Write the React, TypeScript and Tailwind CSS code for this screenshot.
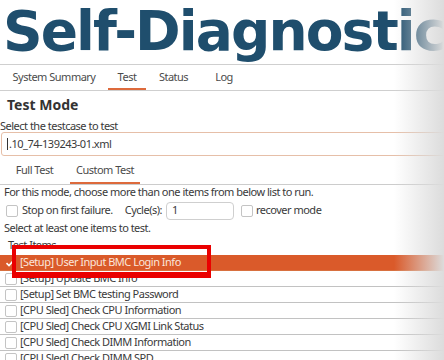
import React from "react";

const rows = [
  "[Setup] Update BMC Info",
  "[Setup] Set BMC testing Password",
  "[CPU Sled] Check CPU Information",
  "[CPU Sled] Check CPU XGMI Link Status",
  "[CPU Sled] Check DIMM Information",
  "[CPU Sled] Check DIMM SPD",
];

function Box() {
  return <span className="block w-[12px] h-[12px] rounded-[2px] border border-[#c4c4c4] bg-white shrink-0" />;
}

export default function App() {
  return (
    <div
      className="relative w-[444px] h-[360px] overflow-hidden bg-white text-[#3a3a3a] text-[11px] tracking-[-0.5px]"
      style={{ fontFamily: '"Noto Sans", "DejaVu Sans", sans-serif' }}
    >
      {/* Title */}
      <div className="h-[64px] pt-[4px] pl-[3px]">
        <div
          className="text-[55px] leading-[55px] font-bold text-[#1f4e6d] tracking-[-1.9px] whitespace-nowrap"
          style={{ fontFamily: '"DejaVu Sans", sans-serif' }}
        >
          Self-Diagnostic
        </div>
      </div>

      {/* Main tabs */}
      <div className="h-[27px] border-y border-[#cfcfcf] flex pl-[4px] gap-[4px] text-[#4b4b4b]">
        <div className="w-[100px] flex items-center justify-center">System Summary</div>
        <div className="w-[38px] flex items-center justify-center border-b-[2px] border-[#dd6a3c] pt-[2px]">Test</div>
        <div className="w-[47px] flex items-center justify-center">Status</div>
        <div className="w-[46px] flex items-center justify-center">Log</div>
      </div>

      {/* Test Mode heading */}
      <div className="h-[28px] leading-[28px] pl-[7px] text-[14px] font-bold text-[#333] tracking-normal">Test Mode</div>
      <div className="h-[13px] leading-[13px]">Select the testcase to test</div>

      {/* file input */}
      <div className="h-[24px] ml-[1px] mr-[-10px] border border-[#e6bfa8] rounded-[3px] flex items-center pl-[5px]">
        <span className="w-[1px] h-[12px] bg-[#333] mr-[1px]" />
        <span>.10_74-139243-01.xml</span>
      </div>

      {/* sub tabs */}
      <div className="h-[28px] border-b border-[#cccccc] flex pl-[5px] gap-[6px] text-[#4b4b4b] mt-[1px]">
        <div className="w-[59px] flex items-center justify-center">Full Test</div>
        <div className="w-[70px] flex items-center justify-center border-b-[2px] border-[#dd6a3c] pt-[2px]">Custom Test</div>
      </div>

      <div className="h-[14px] leading-[14px] pl-[4px]">
        For this mode, choose more than one items from below list to run.
      </div>

      <div className="h-[23px] flex items-center pl-[6px]">
        <Box />
        <span className="ml-[4px]">Stop on first failure.</span>
        <span className="ml-[12px]">Cycle(s):</span>
        <div className="ml-[4px] w-[68px] h-[18px] rounded-[4px] border border-[#cfcfcf] flex items-center pl-[5px]">1</div>
        <span className="ml-[7px]">
          <Box />
        </span>
        <span className="ml-[3px]">recover mode</span>
      </div>

      <div className="h-[12px] leading-[12px] pl-[4px]">Select at least one items to test.</div>
      <div className="h-[21px] pt-[4px] leading-[14px] pl-[8px]">Test Items...</div>

      {/* list */}
      <div className="flex flex-col">
        <div className="h-[16px] bg-[#da5a2a] flex items-center pl-[5px] text-[#fbe6dc] border-b border-[#d8703f]">
          <svg width="10" height="10" viewBox="0 0 10 10" className="shrink-0">
            <path d="M1.5 5.2 L4 7.6 L8.6 2.4" fill="none" stroke="#fff" strokeWidth="1.6" />
          </svg>
          <span className="ml-[5px]">[Setup] User Input BMC Login Info</span>
        </div>
        {rows.map((r) => (
          <div key={r} className="h-[16px] flex items-center pl-[5px] border-b border-[#c2c2c2]">
            <Box />
            <span className="ml-[3px]">{r}</span>
          </div>
        ))}
      </div>

      {/* right fade */}
      <div className="absolute top-0 right-0 h-full w-[50px] bg-gradient-to-r from-[#ffffff00] to-[#dcdcdc] pointer-events-none" />

      {/* red annotation box */}
      <div className="absolute left-[12px] top-[245px] w-[199px] h-[33px] border-[4px] border-b-[6px] border-[#ea0000] pointer-events-none" />
    </div>
  );
}
